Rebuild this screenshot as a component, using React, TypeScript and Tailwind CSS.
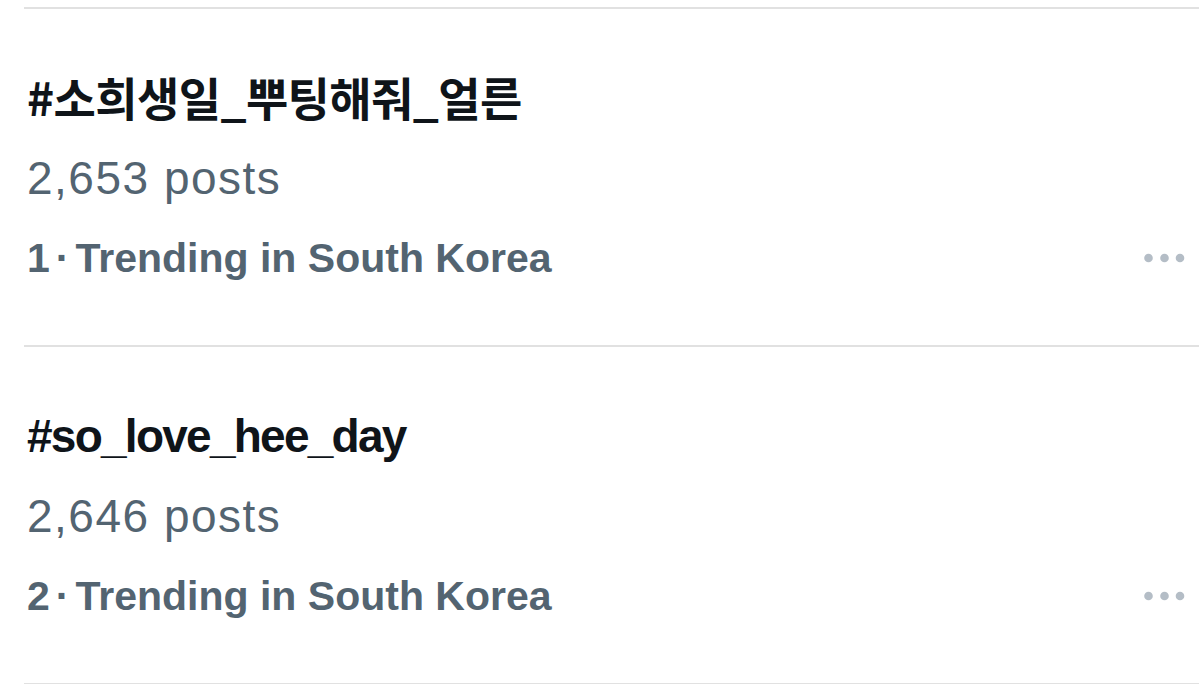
type Trend = {
  tag: string;
  posts: string;
  rank: number;
  korean?: boolean;
};

const trends: Trend[] = [
  { tag: '#소희생일_뿌팅해줘_얼른', posts: '2,653 posts', rank: 1, korean: true },
  { tag: '#so_love_hee_day', posts: '2,646 posts', rank: 2 },
];

function MoreDots() {
  return (
    <svg width="41" height="10" viewBox="0 0 41 10" className="mr-[14px] shrink-0">
      <circle cx="4.5" cy="5" r="4.3" fill="#b4bdc6" />
      <circle cx="20.5" cy="5" r="4.3" fill="#b4bdc6" />
      <circle cx="36" cy="5" r="4.3" fill="#b4bdc6" />
    </svg>
  );
}

function TrendRow({ trend }: { trend: Trend }) {
  return (
    <div className="ml-[24px] h-[338px] border-t-2 border-[#e1e1e1] pl-[3px]">
      {/* Hashtag */}
      {trend.korean ? (
        <div className="pt-[59px] h-[117px] text-[46px] leading-[56px] font-bold text-[#0f1419] tracking-[-0.6px] font-['Noto_Sans_CJK_KR',sans-serif]">
          {trend.tag}
        </div>
      ) : (
        <div className="pt-[61px] h-[117px] text-[46px] leading-[56px] font-bold text-[#0f1419] tracking-[-1.75px] font-['Liberation_Sans',sans-serif]">
          {trend.tag}
        </div>
      )}

      {/* Post count */}
      <div className="mt-[24px] text-[46px] leading-[56px] text-[#536471] tracking-[1.5px] font-['Liberation_Sans',sans-serif]">
        {trend.posts}
      </div>

      {/* Trending meta */}
      <div className="mt-[28px] flex items-center justify-between">
        <div className="text-[41px] leading-[48px] font-bold text-[#536471] font-['Liberation_Sans',sans-serif]">
          {trend.rank}
          <span className="mx-[6px]">·</span>
          Trending in South Korea
        </div>
        <MoreDots />
      </div>
    </div>
  );
}

export default function App() {
  return (
    <div className="w-[1199px] h-[684px] overflow-hidden bg-white pt-[7px]">
      {trends.map((t) => (
        <TrendRow key={t.rank} trend={t} />
      ))}
      <div className="ml-[24px] border-t-2 border-[#e1e1e1]" />
    </div>
  );
}
